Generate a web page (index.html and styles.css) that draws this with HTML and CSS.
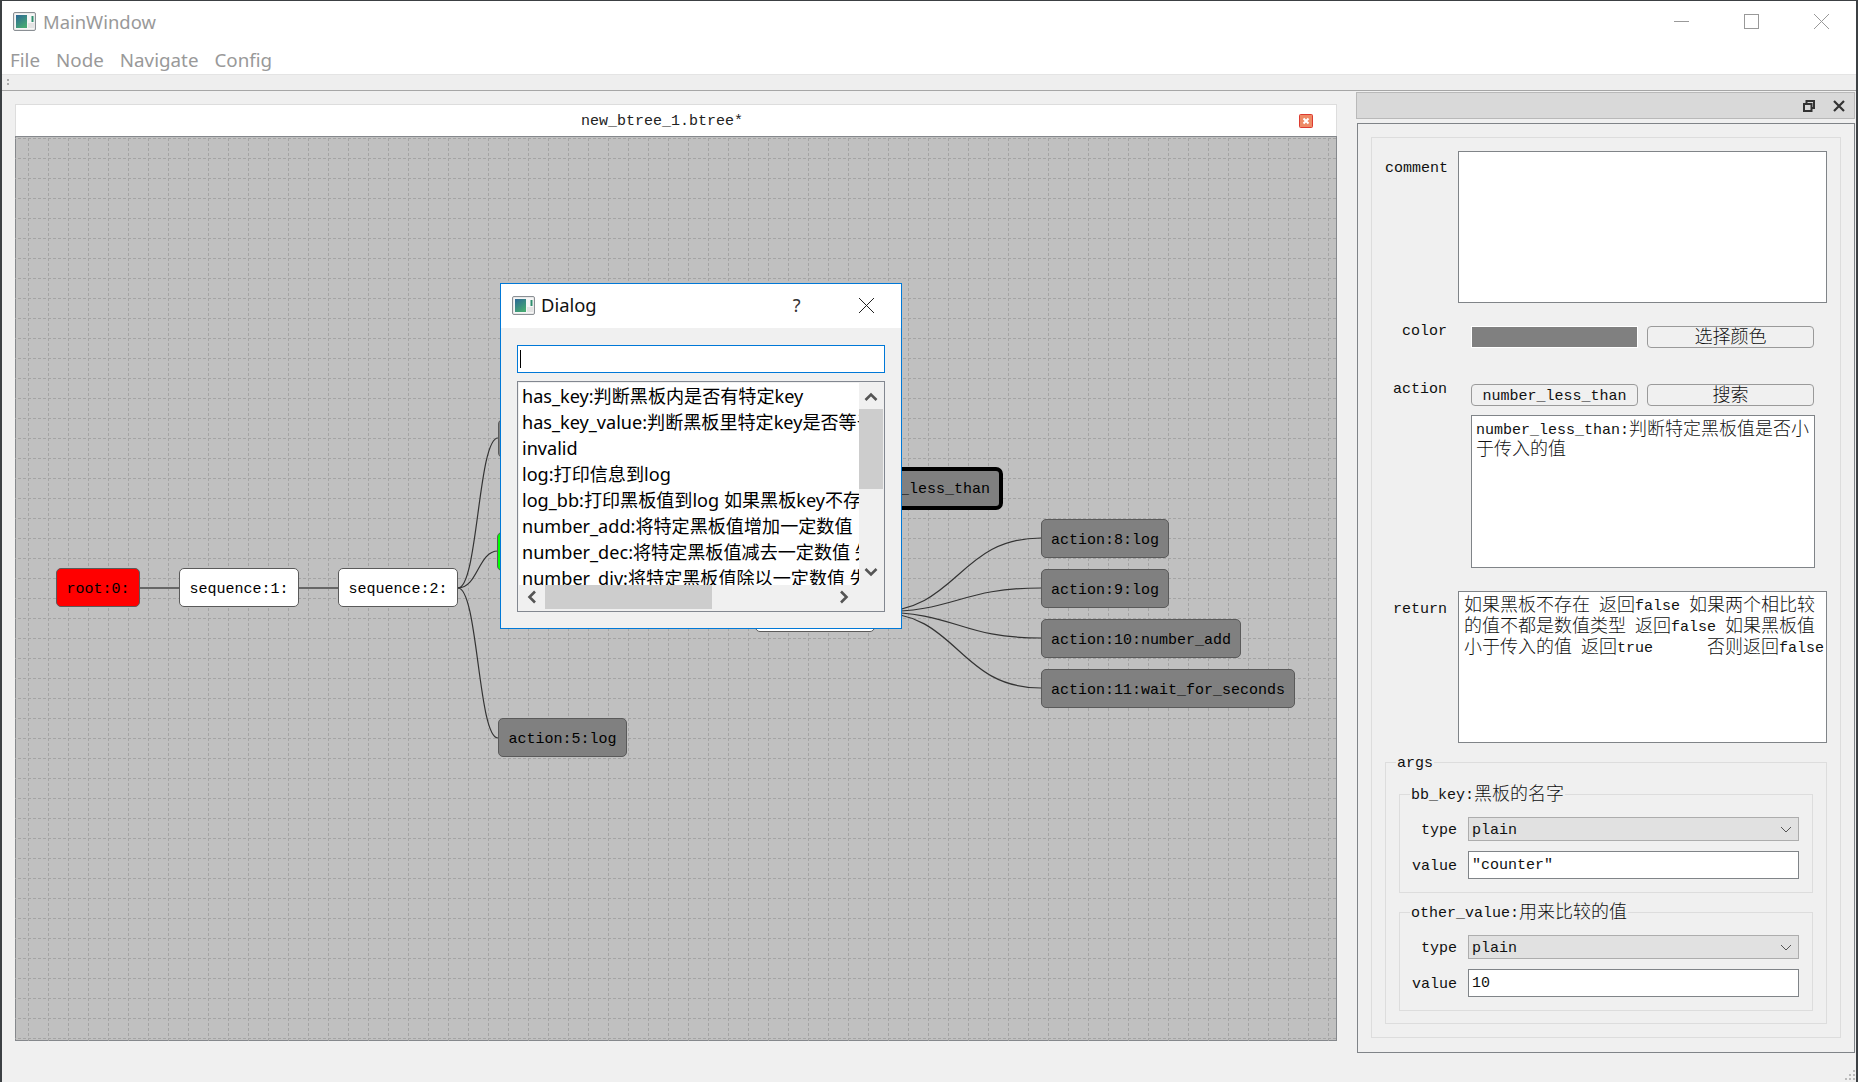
FILE: index.html
```html
<!DOCTYPE html>
<html>
<head>
    <title>MainWindow</title>
    <link rel="stylesheet" href="styles.css">
</head>
<body>
    <!-- Window chrome -->
    <div class="titlebar">
        <svg class="app-icon" viewBox="0 0 23 19">
            <defs>
                <linearGradient id="iconFill" x1="0" y1="0" x2="0.6" y2="1">
                    <stop offset="0" stop-color="#2c6796"/>
                    <stop offset="1" stop-color="#46a873"/>
                </linearGradient>
            </defs>
            <rect x="0.500" y="0.500" width="22" height="18" rx="1.500" fill="#e9e9e9" stroke="#8a8f94"/>
            <rect x="2" y="2" width="19" height="15" fill="#f6f6f6"/>
            <rect x="3" y="3" width="11" height="13" fill="url(#iconFill)"/>
            <rect x="15" y="11" width="6" height="5" fill="#e4e4e4"/>
            <rect x="18.500" y="4" width="2" height="6" fill="#2f8f6f"/>
        </svg>
        <span class="window-title">MainWindow</span>
        <div class="window-buttons">
            <svg viewBox="0 0 15 15"><path d="M0 7.5H15" stroke="#999" fill="none"/></svg>
            <svg viewBox="0 0 15 15"><rect x="0.5" y="0.5" width="14" height="14" stroke="#999" fill="none"/></svg>
            <svg viewBox="0 0 15 15"><path d="M0 0L15 15M15 0L0 15" stroke="#999" fill="none"/></svg>
        </div>
    </div>
    <div class="menubar">
        <span>File</span>
        <span>Node</span>
        <span>Navigate</span>
        <span>Config</span>
    </div>
    <div class="toolbar"><div class="toolbar-grip"></div></div>

    <div class="main">
        <!-- Tree editor -->
        <div class="editor">
            <div class="tab">
                <span class="tab-title">new_btree_1.btree*</span>
                <svg class="tab-close" viewBox="0 0 14 14"><rect x="0.5" y="0.5" width="13" height="13" rx="1" fill="#ee8a66" stroke="#dd3b30"/><path d="M4.5 4.5L9.5 9.5M9.5 4.5L4.5 9.5" stroke="#fff" stroke-width="2"/></svg>
            </div>
            <div class="canvas">
                <svg class="canvas-bg">
                    <defs>
                        <pattern id="grid" x="13" y="2" width="20" height="20" patternUnits="userSpaceOnUse">
                            <path d="M0.5 0V20M0 0.5H20" stroke="#a4a4a4" stroke-dasharray="3 2" fill="none"/>
                        </pattern>
                    </defs>
                    <rect width="100%" height="100%" fill="url(#grid)"/>
                    <path class="wire-thick" d="M125 452H164M284 452H323"/>
                    <path class="wire" d="M443 452C463 452 463 302 483 302"/>
                    <path class="wire" d="M443 452C463 452 463 415 483 415"/>
                    <path class="wire" d="M443 452C463 452 463 602 483 602"/>
                    <path class="wire" d="M860 476C943 476 943 402 1026 402"/>
                    <path class="wire" d="M860 476C943 476 943 452 1026 452"/>
                    <path class="wire" d="M860 476C943 476 943 502 1026 502"/>
                    <path class="wire" d="M860 476C943 476 943 552 1026 552"/>
                </svg>
                <div class="node node-red n-root">root:0:</div>
                <div class="node node-white n-seq1">sequence:1:</div>
                <div class="node node-white n-seq2">sequence:2:</div>
                <div class="node node-gray n-hidden"></div>
                <div class="node node-green n-green"></div>
                <div class="node node-gray n-log5">action:5:log</div>
                <div class="node node-gray node-selected n-selected">_less_than</div>
                <div class="node node-white n-seq7"></div>
                <div class="node node-gray n-log8">action:8:log</div>
                <div class="node node-gray n-log9">action:9:log</div>
                <div class="node node-gray n-add10">action:10:number_add</div>
                <div class="node node-gray n-wait11">action:11:wait_for_seconds</div>
            </div>
        </div>

        <!-- Inspector dock -->
        <div class="dock">
            <div class="dock-title">
                <svg viewBox="0 0 12 12"><path d="M3.5 3V1H11V8H9M1 4H8.5V11H1Z" stroke="#333" stroke-width="2" fill="none"/></svg>
                <svg viewBox="0 0 12 12"><path d="M1 1L11 11M11 1L1 11" stroke="#333" stroke-width="2.2" fill="none"/></svg>
            </div>
            <div class="dock-frame">
                <div class="inspector">
                    <div class="row row-comment">
                        <label class="row-label">comment</label>
                        <div class="textbox box-tall"></div>
                    </div>
                    <div class="row row-color">
                        <label class="row-label">color</label>
                        <div class="pair">
                            <div class="swatch"></div>
                            <button class="btn"><span class="zh">选择颜色</span></button>
                        </div>
                    </div>
                    <div class="row row-action">
                        <label class="row-label">action</label>
                        <div class="action-col">
                            <div class="pair">
                                <button class="btn">number_less_than</button>
                                <button class="btn"><span class="zh">搜索</span></button>
                            </div>
                            <div class="textbox box-tall box-note">number_less_than:<span class="zh">判断特定黑板值是否小</span><br><span class="zh">于传入的值</span></div>
                        </div>
                    </div>
                    <div class="row row-return">
                        <label class="row-label">return</label>
                        <div class="textbox box-tall box-return"><span class="zh">如果黑板不存在</span> <span class="zh">返回</span>false <span class="zh">如果两个相比较</span><br><span class="zh">的值不都是数值类型</span> <span class="zh">返回</span>false <span class="zh">如果黑板值</span><br><span class="zh">小于传入的值</span> <span class="zh">返回</span>true      <span class="zh">否则返回</span>false</div>
                    </div>

                    <div class="group group-args">
                        <span class="group-title">args</span>
                        <div class="group group-arg">
                            <span class="group-title">bb_key:<span class="zh">黑板的名字</span></span>
                            <div class="arg-row">
                                <label>type</label>
                                <div class="combo">plain<svg viewBox="0 0 12 7"><path d="M1 1L6 6L11 1" stroke="#555" fill="none"/></svg></div>
                            </div>
                            <div class="arg-row">
                                <label>value</label>
                                <div class="line-edit">"counter"</div>
                            </div>
                        </div>
                        <div class="group group-arg">
                            <span class="group-title">other_value:<span class="zh">用来比较的值</span></span>
                            <div class="arg-row">
                                <label>type</label>
                                <div class="combo">plain<svg viewBox="0 0 12 7"><path d="M1 1L6 6L11 1" stroke="#555" fill="none"/></svg></div>
                            </div>
                            <div class="arg-row">
                                <label>value</label>
                                <div class="line-edit">10</div>
                            </div>
                        </div>
                    </div>
                </div>
            </div>
        </div>
    </div>

    <svg class="size-grip" viewBox="0 0 12 12"><path d="M9 1h2v2H9zM5 5h2v2H5zM9 5h2v2H9zM1 9h2v2H1zM5 9h2v2H5zM9 9h2v2H9z" fill="#bbb"/></svg>

    <!-- Search dialog -->
    <div class="dialog">
        <div class="dialog-title">
            <svg class="app-icon" viewBox="0 0 23 19">
                <rect x="0.500" y="0.500" width="22" height="18" rx="1.500" fill="#e9e9e9" stroke="#8a8f94"/>
                <rect x="2" y="2" width="19" height="15" fill="#f6f6f6"/>
                <rect x="3" y="3" width="11" height="13" fill="url(#iconFill)"/>
                <rect x="15" y="11" width="6" height="5" fill="#e4e4e4"/>
                <rect x="18.500" y="4" width="2" height="6" fill="#2f8f6f"/>
            </svg>
            <span class="dialog-name">Dialog</span>
            <span class="dialog-help">?</span>
            <svg class="dialog-close" viewBox="0 0 15 15"><path d="M0 0L15 15M15 0L0 15" stroke="#222" fill="none"/></svg>
        </div>
        <div class="dialog-body">
            <div class="search-input"><div class="caret"></div></div>
            <div class="list">
                <div class="list-view">
                    <div class="list-item">has_key:判断黑板内是否有特定key</div>
                    <div class="list-item">has_key_value:判断黑板里特定key是否等于</div>
                    <div class="list-item">invalid</div>
                    <div class="list-item">log:打印信息到log</div>
                    <div class="list-item">log_bb:打印黑板值到log 如果黑板key不存在</div>
                    <div class="list-item">number_add:将特定黑板值增加一定数值</div>
                    <div class="list-item">number_dec:将特定黑板值减去一定数值 失败</div>
                    <div class="list-item">number_div:将特定黑板值除以一定数值 失败</div>
                </div>
                <div class="vscroll">
                    <svg viewBox="0 0 24 26"><path d="M6.5 17L12 11.5L17.5 17" stroke="#555" stroke-width="2.6" fill="none"/></svg>
                    <div class="vthumb"></div>
                    <svg class="scroll-end" viewBox="0 0 24 26"><path d="M6.5 10L12 15.500L17.5 10" stroke="#555" stroke-width="2.6" fill="none"/></svg>
                </div>
                <div class="hscroll">
                    <svg viewBox="0 0 27 24"><path d="M16 6.500L10.500 12L16 17.500" stroke="#555" stroke-width="2.6" fill="none"/></svg>
                    <div class="hthumb"></div>
                    <svg class="scroll-end" viewBox="0 0 27 24"><path d="M9 6.500L14.500 12L9 17.500" stroke="#555" stroke-width="2.6" fill="none"/></svg>
                </div>
            </div>
        </div>
    </div>
</body>
</html>
```
FILE: styles.css
```css
* {
    box-sizing: border-box;
}

body {
    position: relative;
    width: 1858px;
    height: 1082px;
    margin: 0;
    overflow: hidden;
    background: #f0f0f0;
    border-top: 1px solid #3c4043;
    border-left: 2px solid #3c4043;
    border-right: 2px solid #3c4043;
    font-family: "Noto Sans", "Noto Sans CJK SC", sans-serif;
}

/* window chrome */
.titlebar {
    display: flex;
    align-items: center;
    height: 42px;
    padding: 0 0 1px 11px;
    background: #fff;
}

.app-icon {
    width: 23px;
    height: 19px;
}

.window-title {
    margin-left: 7px;
    font-size: 18.4px;
    line-height: 24px;
    color: #999;
}

.window-buttons {
    display: flex;
    gap: 55px;
    margin-left: auto;
    margin-right: 27px;
}

.window-buttons svg {
    width: 15px;
    height: 15px;
}

.menubar {
    display: flex;
    gap: 16px;
    height: 31px;
    padding-left: 8px;
    background: #fff;
    font-size: 18.8px;
    line-height: 34px;
    color: #999;
}

.toolbar {
    height: 17px;
    padding: 4px 0 0 5px;
    background: #eee;
    border-top: 1px solid #e4e4e4;
    border-bottom: 1px solid #a6a6a6;
}

.toolbar-grip {
    width: 2px;
    height: 8px;
    background: repeating-linear-gradient(#aaa 0 2px, transparent 2px 4px);
}

.main {
    display: flex;
    align-items: flex-start;
}

/* editor */
.editor {
    width: 1322px;
    margin: 13px 0 0 13px;
}

.tab {
    position: relative;
    display: flex;
    align-items: center;
    justify-content: center;
    height: 32px;
    padding: 2px 28px 0 0;
    background: #fff;
    border: 1px solid #ddd;
    border-bottom: none;
}

.tab-title {
    font-family: "Liberation Mono", monospace;
    font-size: 15px;
    color: #222;
}

.tab-close {
    position: absolute;
    left: 1283px;
    top: 9px;
    width: 14px;
    height: 14px;
}

.canvas {
    position: relative;
    height: 905px;
    background: #c0c0c0;
    box-shadow: inset 0 0 0 1px #85888c;
}

.canvas-bg {
    position: absolute;
    left: 0;
    top: 0;
    width: 100%;
    height: 100%;
}

.wire {
    fill: none;
    stroke: #333;
    stroke-width: 1.2;
}

.wire-thick {
    fill: none;
    stroke: #666;
    stroke-width: 2;
}

.node {
    position: absolute;
    display: flex;
    align-items: center;
    justify-content: center;
    height: 39px;
    padding-top: 3px;
    border: 1.5px solid #5a5a5a;
    border-radius: 5px;
    font-family: "Liberation Mono", monospace;
    font-size: 15px;
    color: #000;
}

.node-red { background: #f00; }
.node-white { background: #fff; }
.node-green { background: #0f0; }
.node-gray { background: #808080; }

.node-selected {
    justify-content: flex-end;
    height: 43px;
    padding: 1px 9px 0 0;
    border: 4px solid #000;
    border-radius: 7px;
}

.n-root { left: 41px; top: 432px; width: 84px; }
.n-seq1 { left: 164px; top: 432px; width: 120px; }
.n-seq2 { left: 323px; top: 432px; width: 120px; }
.n-hidden { left: 483px; top: 283px; width: 60px; }
.n-green { left: 482px; top: 396px; width: 60px; }
.n-log5 { left: 483px; top: 582px; width: 129px; }
.n-selected { left: 840px; top: 331px; width: 148px; }
.n-seq7 { left: 740px; top: 457px; width: 120px; }
.n-log8 { left: 1026px; top: 383px; width: 128px; }
.n-log9 { left: 1026px; top: 433px; width: 128px; }
.n-add10 { left: 1026px; top: 483px; width: 200px; }
.n-wait11 { left: 1026px; top: 533px; width: 254px; }

/* dock */
.dock {
    width: 499px;
    margin: 1px 0 0 19px;
}

.dock-title {
    display: flex;
    align-items: center;
    justify-content: flex-end;
    gap: 18px;
    height: 27px;
    padding-right: 9px;
    background: #d9d9d9;
    border: 1px solid #b9b9b9;
}

.dock-title svg {
    width: 12px;
    height: 12px;
}

.dock-frame {
    height: 930px;
    margin: 4px 0 0 1px;
    padding: 13px;
    border: 1px solid #808488;
}

.inspector {
    height: 901px;
    padding: 13px;
    border: 1px solid #ddd;
    font-family: "Liberation Mono", monospace;
    font-size: 15px;
    color: #111;
}

/* chinese text sits inline but must not stretch the line */
.zh {
    font-family: "Noto Sans CJK SC", sans-serif;
    font-size: 18px;
    font-weight: 300;
    line-height: 0;
    vertical-align: -1px;
}

.row {
    display: flex;
    gap: 11px;
}

.row-label {
    width: 62px;
    flex: none;
    text-align: right;
}

.row-comment .row-label { padding-top: 9px; }
.row-color .row-label { margin-top: -2px; line-height: 16px; }
.row-action .row-label { margin-top: -2px; line-height: 16px; }
.row-return .row-label { padding-top: 10px; }

.row-color { margin-top: 23px; }
.row-action { margin-top: 36px; }
.row-return { margin-top: 23px; }

.textbox {
    background: #fff;
    border: 1px solid #808488;
}

.box-tall {
    width: 369px;
    height: 152px;
}

.box-note {
    width: 344px;
    height: 153px;
    margin-top: 9px;
    padding: 5px 4px;
    line-height: 20px;
    white-space: pre;
}

.box-return {
    padding: 4px 5px;
    line-height: 21px;
    white-space: pre;
}

.pair {
    display: flex;
    gap: 9px;
    margin-left: 13px;
}

.swatch {
    width: 167px;
    height: 22px;
    background: #808080;
    border: 1px solid #fff;
}

.btn {
    width: 167px;
    height: 22px;
    padding: 3px 0 0;
    background: #f0f0f0;
    border: 1px solid #9a9a9a;
    border-radius: 4px;
    font-family: "Liberation Mono", monospace;
    font-size: 15px;
    line-height: 18px;
    color: #111;
}

.action-col {
    margin-left: 13px;
}

.action-col .pair {
    margin-left: 0;
}

.group {
    position: relative;
    border: 1px solid #ddd;
}

.group-title {
    position: absolute;
    top: -9px;
    left: 10px;
    padding: 0 1px;
    background: #f0f0f0;
    line-height: 20px;
    white-space: nowrap;
}

.group-args {
    height: 262px;
    margin-top: 19px;
    padding: 31px 13px 0;
}

.group-arg {
    height: 99px;
    padding: 22px 13px 0 0;
}

.group-arg + .group-arg {
    margin-top: 19px;
}

.arg-row {
    display: flex;
    align-items: center;
    gap: 11px;
}

.arg-row + .arg-row {
    margin-top: 10px;
}

.arg-row label {
    width: 57px;
    padding-top: 2px;
    text-align: right;
}

.combo {
    display: flex;
    align-items: center;
    justify-content: space-between;
    width: 331px;
    height: 24px;
    padding: 2px 6px 0 3px;
    background: #e1e1e1;
    border: 1px solid #adadad;
}

.combo svg {
    width: 12px;
    height: 7px;
    margin-top: -2px;
}

.line-edit {
    width: 331px;
    height: 28px;
    padding: 1px 3px 0;
    background: #fff;
    border: 1px solid #808488;
    line-height: 26px;
}

.size-grip {
    position: absolute;
    right: 0;
    bottom: 1px;
    width: 12px;
    height: 12px;
}

/* dialog */
.dialog {
    position: absolute;
    left: 498px;
    top: 282px;
    width: 402px;
    height: 346px;
    background: #f0f0f0;
    border: 1px solid #0078d7;
}

.dialog-title {
    display: flex;
    align-items: center;
    height: 44px;
    padding: 0 0 2px 11px;
    background: #fff;
}

.dialog-name {
    margin: 0 0 2px 6px;
    font-size: 18.4px;
    color: #111;
}

.dialog-help {
    margin-left: 196px;
    font-size: 18px;
    color: #333;
}

.dialog-close {
    width: 15px;
    height: 15px;
    margin-left: 59px;
}

.dialog-body {
    padding: 17px 16px 0;
}

.search-input {
    height: 28px;
    padding: 4px 2px;
    background: #fff;
    border: 1px solid #0078d7;
}

.caret {
    width: 1px;
    height: 18px;
    background: #000;
}

.list {
    display: grid;
    grid-template-columns: 340px 24px;
    grid-template-rows: 202px 24px;
    height: 231px;
    margin-top: 8px;
    padding: 1px;
    background: #f0f0f0;
    border: 1px solid #828790;
}

.list-view {
    overflow: hidden;
    background: #fff;
}

.list-item {
    height: 26px;
    padding-left: 3px;
    font-family: "Noto Sans", "Noto Sans CJK SC", sans-serif;
    font-size: 18.1px;
    line-height: 26px;
    white-space: nowrap;
    color: #000;
}

.vscroll {
    display: flex;
    flex-direction: column;
}

.vscroll svg {
    width: 24px;
    height: 26px;
    flex: none;
}

.vthumb {
    height: 80px;
    background: #cdcdcd;
}

.hscroll {
    display: flex;
}

.hscroll svg {
    width: 27px;
    height: 24px;
    flex: none;
}

.hthumb {
    width: 167px;
    margin-left: -1px;
    background: #cdcdcd;
}

.scroll-end {
    margin-top: auto;
    margin-left: auto;
}
```
